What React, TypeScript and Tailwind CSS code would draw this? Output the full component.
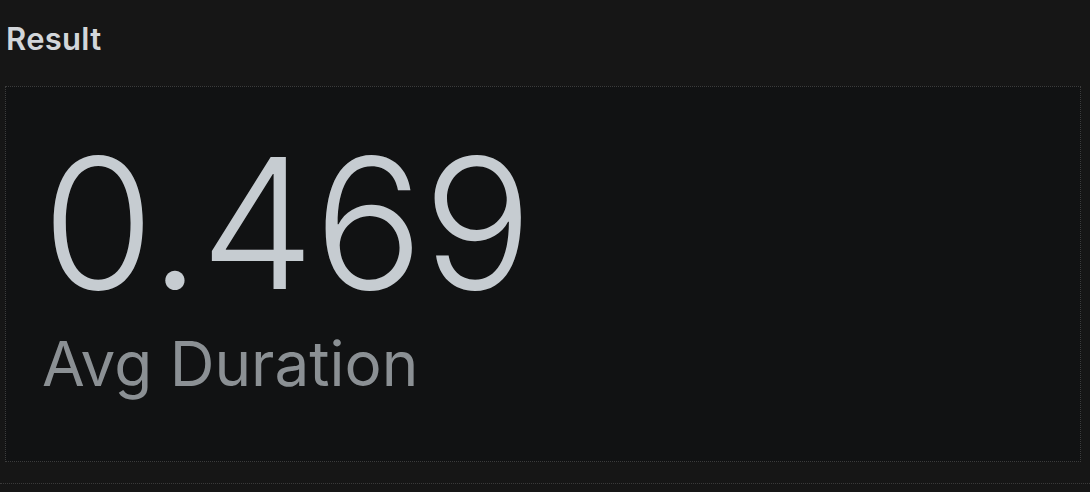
export default function App() {
  return (
    <div className="w-[1090px] h-[492px] overflow-hidden bg-[#161616] font-['Inter','Liberation_Sans',sans-serif]">
      <div className="h-[484px] border-b border-dotted border-[#3a3a3a] px-[5px] pt-[21px]">
        <h2 className="text-[31px] leading-[36px] font-semibold tracking-[0.3px] text-[#d2d6da] pl-[1px]">Result</h2>
        <div className="mt-[29px] h-[376px] w-[1076px] border border-dotted border-[#3c3c3c] bg-[#111213] pl-[36px] pt-[66px]">
          <div className="text-[182px] leading-[140px] font-[350] tracking-[-0.5px] text-[#c6ccd1]">0.469</div>
          <div className="mt-[36px] text-[62px] leading-[70px] font-normal text-[#8b9094]">Avg Duration</div>
        </div>
      </div>
    </div>
  );
}
